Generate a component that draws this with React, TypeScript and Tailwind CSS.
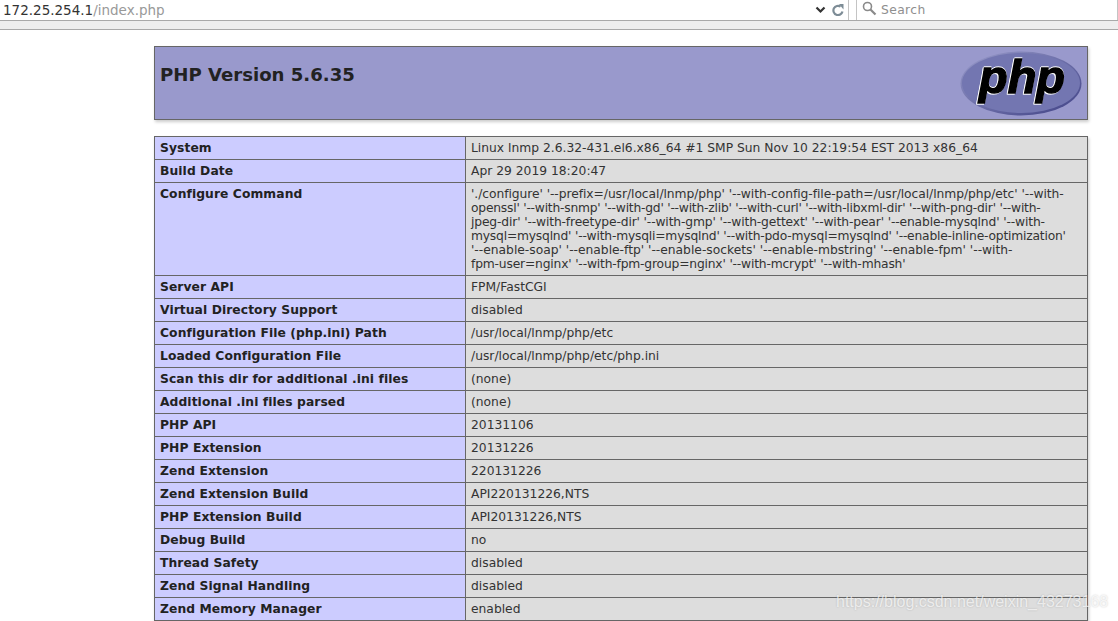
const configureLines: [string, string][] = [
  ["'./configure' '--prefix=/usr/local/lnmp/php' '--with-config-file-path=/usr/local/lnmp/php/etc' '--with-", 'tracking-[-0.06px]'],
  ["openssl' '--with-snmp' '--with-gd' '--with-zlib' '--with-curl' '--with-libxml-dir' '--with-png-dir' '--with-", 'tracking-[-0.22px]'],
  ["jpeg-dir' '--with-freetype-dir' '--with-gmp' '--with-gettext' '--with-pear' '--enable-mysqlnd' '--with-", 'tracking-[-0.14px]'],
  ["mysql=mysqlnd' '--with-mysqli=mysqlnd' '--with-pdo-mysql=mysqlnd' '--enable-inline-optimization'", 'tracking-[-0.2px]'],
  ["'--enable-soap' '--enable-ftp' '--enable-sockets' '--enable-mbstring' '--enable-fpm' '--with-", 'tracking-[-0.01px]'],
  ["fpm-user=nginx' '--with-fpm-group=nginx' '--with-mcrypt' '--with-mhash'", 'tracking-[-0.18px]'],
];

const rows: [string, string | null][] = [
  ['System', 'Linux lnmp 2.6.32-431.el6.x86_64 #1 SMP Sun Nov 10 22:19:54 EST 2013 x86_64'],
  ['Build Date', 'Apr 29 2019 18:20:47'],
  ['Configure Command', null],
  ['Server API', 'FPM/FastCGI'],
  ['Virtual Directory Support', 'disabled'],
  ['Configuration File (php.ini) Path', '/usr/local/lnmp/php/etc'],
  ['Loaded Configuration File', '/usr/local/lnmp/php/etc/php.ini'],
  ['Scan this dir for additional .ini files', '(none)'],
  ['Additional .ini files parsed', '(none)'],
  ['PHP API', '20131106'],
  ['PHP Extension', '20131226'],
  ['Zend Extension', '220131226'],
  ['Zend Extension Build', 'API220131226,NTS'],
  ['PHP Extension Build', 'API20131226,NTS'],
  ['Debug Build', 'no'],
  ['Thread Safety', 'disabled'],
  ['Zend Signal Handling', 'disabled'],
  ['Zend Memory Manager', 'enabled'],
];

function PhpLogo() {
  return (
    <svg width="122" height="66" viewBox="0 0 122 66">
      <defs>
        <linearGradient id="rim" x1="0" y1="0" x2="1" y2="1">
          <stop offset="0" stopColor="#9a9ccb" />
          <stop offset="1" stopColor="#3f4185" />
        </linearGradient>
      </defs>
      <ellipse cx="61" cy="32.5" rx="60.5" ry="32" fill="url(#rim)" />
      <ellipse cx="61" cy="32" rx="59" ry="30" fill="#7376b1" />
      <text
        x="62"
        y="42"
        textAnchor="middle"
        fontFamily="'Liberation Sans', sans-serif"
        fontWeight="700"
        fontStyle="italic"
        fontSize="46"
        textLength="86"
        lengthAdjust="spacingAndGlyphs"
        fill="#000"
        stroke="#000"
        strokeWidth="1.4"
        className="[filter:drop-shadow(-1px_1px_0_#fff)_drop-shadow(0.5px_-0.5px_0_#fff)]"
      >
        php
      </text>
    </svg>
  );
}

export default function App() {
  return (
    <div className="relative h-[621px] w-[1118px] overflow-hidden bg-white font-['DejaVu_Sans',sans-serif] text-[#222]">
      <div className="flex h-[21px] items-start border-b border-[#a9a9a9]">
        <div className="flex h-5 w-[849px] items-center justify-between border-r border-[#c4c4c4] pl-[3px] pr-1">
          <div className="text-[13.5px] leading-5 text-[#333]">
            172.25.254.1<span className="text-[#999]">/index.php</span>
          </div>
          <div className="flex items-center gap-[6px]">
            <svg width="11" height="8" viewBox="0 0 11 8">
              <path d="M1.5 1.5 L5.5 5.5 L9.5 1.5" fill="none" stroke="#333" strokeWidth="2.2" />
            </svg>
            <svg width="12" height="12" viewBox="0 0 12 12">
              <path d="M10.5 7.5 A4.6 4.6 0 1 1 8.6 2.6" fill="none" stroke="#7d8c96" strokeWidth="2.2" />
              <path d="M7 0 L11.5 0 L11.5 5.5 Z" fill="#7d8c96" />
            </svg>
          </div>
        </div>
        <div className="ml-[7px] flex h-5 w-[262px] items-center gap-1 border-x border-[#c4c4c4] pl-[5px]">
          <svg width="15" height="15" viewBox="0 0 15 15" className="-mt-1">
            <circle cx="5.5" cy="5.5" r="4" fill="none" stroke="#8a8a8a" strokeWidth="1.6" />
            <path d="M8.5 8.5 L13.5 13.5" stroke="#8a8a8a" strokeWidth="2.2" />
          </svg>
          <span className="text-[12.3px] tracking-[0.4px] text-[#8f8f8f]">Search</span>
        </div>
      </div>
      <div className="h-[9px] border-b border-[#a9a9a9] bg-[#eeeeee]" />

      <div className="ml-[154px] mt-4 w-[934px]">
        <div className="flex h-[74px] items-start justify-between border border-[#666] bg-[#9999cc] shadow-[1px_2px_3px_#ccc]">
          <h1 className="ml-[5px] mt-[14px] text-[18.1px] font-bold leading-7">PHP Version 5.6.35</h1>
          <div className="mr-[5px] mt-1">
            <PhpLogo />
          </div>
        </div>

        <table className="mt-4 w-[934px] table-fixed border-collapse text-[12.3px] leading-[14px] shadow-[1px_2px_3px_#ccc]">
          <colgroup>
            <col className="w-[311px]" />
            <col />
          </colgroup>
          <tbody>
            {rows.map(([name, value]) => (
              <tr key={name}>
                <td className="h-[23px] border border-[#666] bg-[#ccccff] px-[5px] py-1 align-top font-bold tracking-[0.08px]">
                  {name}
                </td>
                <td className="h-[23px] border border-[#666] bg-[#dddddd] px-[5px] py-1 align-top text-[#333]">
                  {value ??
                    configureLines.map(([line, tracking]) => (
                      <div key={line} className={`whitespace-nowrap ${tracking}`}>
                        {line}
                      </div>
                    ))}
                </td>
              </tr>
            ))}
          </tbody>
        </table>
      </div>

      <div className="absolute left-[836px] top-[592px] font-['Liberation_Sans',sans-serif] text-[16px] leading-5 text-white/70 [text-shadow:0_0_2px_rgba(0,0,0,0.2)]">
        https://blog.csdn.net/weixin_43273168
      </div>
    </div>
  );
}
